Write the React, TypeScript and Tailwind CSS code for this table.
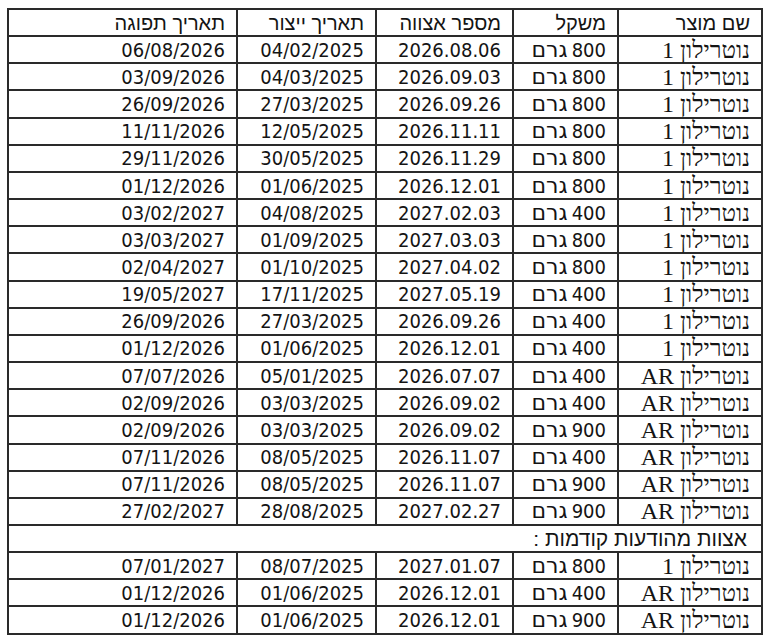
const rows = [
  ["1", "800", "2026.08.06", "04/02/2025", "06/08/2026"],
  ["1", "800", "2026.09.03", "04/03/2025", "03/09/2026"],
  ["1", "800", "2026.09.26", "27/03/2025", "26/09/2026"],
  ["1", "800", "2026.11.11", "12/05/2025", "11/11/2026"],
  ["1", "800", "2026.11.29", "30/05/2025", "29/11/2026"],
  ["1", "800", "2026.12.01", "01/06/2025", "01/12/2026"],
  ["1", "400", "2027.02.03", "04/08/2025", "03/02/2027"],
  ["1", "800", "2027.03.03", "01/09/2025", "03/03/2027"],
  ["1", "800", "2027.04.02", "01/10/2025", "02/04/2027"],
  ["1", "400", "2027.05.19", "17/11/2025", "19/05/2027"],
  ["1", "400", "2026.09.26", "27/03/2025", "26/09/2026"],
  ["1", "400", "2026.12.01", "01/06/2025", "01/12/2026"],
  ["AR", "400", "2026.07.07", "05/01/2025", "07/07/2026"],
  ["AR", "400", "2026.09.02", "03/03/2025", "02/09/2026"],
  ["AR", "900", "2026.09.02", "03/03/2025", "02/09/2026"],
  ["AR", "400", "2026.11.07", "08/05/2025", "07/11/2026"],
  ["AR", "900", "2026.11.07", "08/05/2025", "07/11/2026"],
  ["AR", "900", "2027.02.27", "28/08/2025", "27/02/2027"],
];

const previous = [
  ["1", "800", "2027.01.07", "08/07/2025", "07/01/2027"],
  ["AR", "400", "2026.12.01", "01/06/2025", "01/12/2026"],
  ["AR", "900", "2026.12.01", "01/06/2025", "01/12/2026"],
];

const cell = "border-2 border-[#2a2a2a] text-right align-middle pr-[11px] p-0 leading-none";
const num = "font-['DejaVu_Sans_Condensed','DejaVu_Sans',sans-serif] text-[20px] text-[#141414]";
const heb = "font-['Liberation_Sans','DejaVu_Sans',sans-serif] text-[20px] text-[#141414]";

function Row({ r }: { r: string[] }) {
  const [name, weight, batch, made, expires] = r;
  return (
    <tr className="h-[27.17px]">
      <td className={cell}>
        <span className="font-['Liberation_Serif','DejaVu_Serif',serif] text-[24px] text-[#141414]">
          נוטרילון {name}
        </span>
      </td>
      <td className={cell}>
        <span className={num}>{weight}</span>{" "}
        <span className="font-['DejaVu_Sans',sans-serif] text-[22px] text-[#141414]">גרם</span>
      </td>
      <td className={cell}>
        <span dir="ltr" className={num}>{batch}</span>
      </td>
      <td className={cell}>
        <span dir="ltr" className={num}>{made}</span>
      </td>
      <td className={cell}>
        <span dir="ltr" className={num}>{expires}</span>
      </td>
    </tr>
  );
}

export default function App() {
  return (
    <div className="bg-white w-[768px] h-[643px] pt-[8px] pl-[7px]">
      <table dir="rtl" className="border-collapse table-fixed w-[754px]">
        <colgroup>
          <col className="w-[144px]" />
          <col className="w-[105px]" />
          <col className="w-[137px]" />
          <col className="w-[139px]" />
          <col className="w-[229px]" />
        </colgroup>
        <thead>
          <tr className="h-[27.17px]">
            {["שם מוצר", "משקל", "מספר אצווה", "תאריך ייצור", "תאריך תפוגה"].map((h) => (
              <th key={h} className={`${cell} font-normal`}>
                <span className={heb}>{h}</span>
              </th>
            ))}
          </tr>
        </thead>
        <tbody>
          {rows.map((r, i) => (
            <Row key={i} r={r} />
          ))}
          <tr className="h-[27.17px]">
            <td colSpan={5} className={`${cell} pr-[14px]`}>
              <span className={`${heb} text-[21px]`}>אצוות מהודעות קודמות :</span>
            </td>
          </tr>
          {previous.map((r, i) => (
            <Row key={i} r={r} />
          ))}
        </tbody>
      </table>
    </div>
  );
}
